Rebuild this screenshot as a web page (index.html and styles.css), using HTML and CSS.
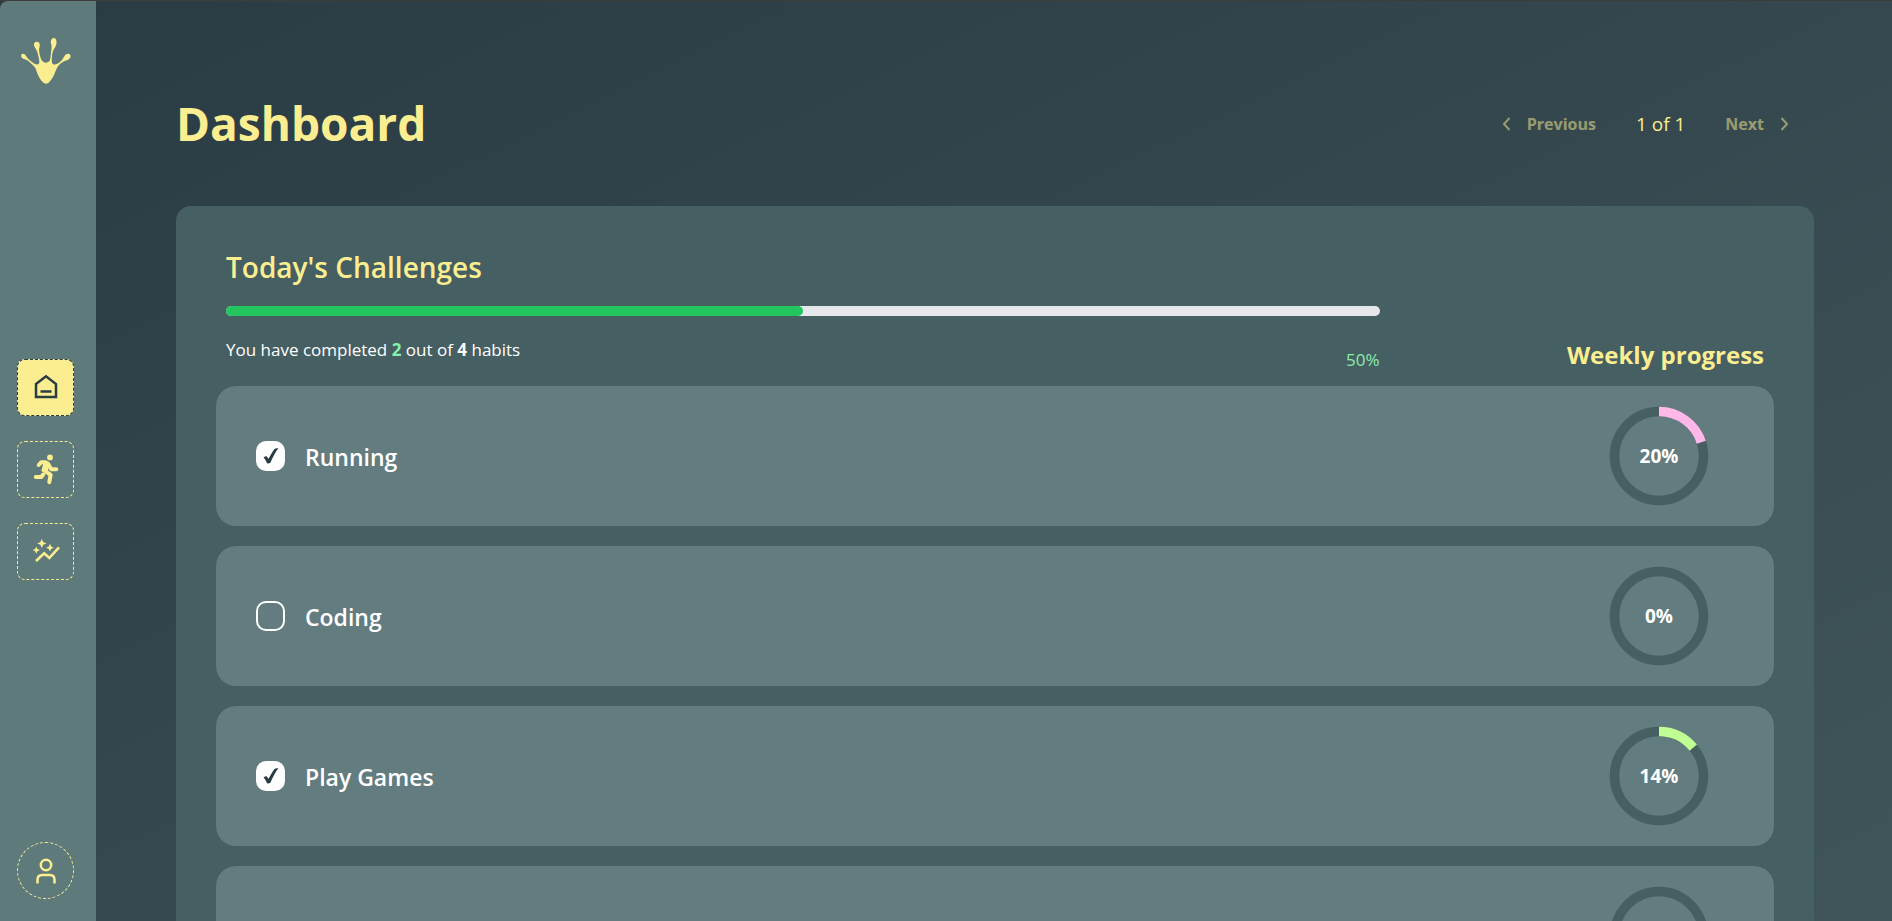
FILE: index.html
```html
<!DOCTYPE html>
<html lang="en">
<head>
<meta charset="utf-8">
<meta name="viewport" content="width=device-width, initial-scale=1">
<title>Dashboard</title>
<link rel="stylesheet" href="styles.css">
</head>
<body>
<div class="app">
  <aside class="sidebar">
    <a class="logo" href="#" aria-label="Home page">
      <svg viewBox="0 0 50 48" width="50" height="48" aria-hidden="true">
        <path d="M25 45.700C28 45.700 31 41 33 37C34.600 33.500 35.500 29.500 38.300 26.700C41 24 43.500 23 46 22.300C48.800 21.500 50.200 19 49.300 17.200C48.300 15.300 45.300 15.200 43.500 18C42 20.500 40.500 23 38.300 24.500C36 26.200 34 26.800 32.300 26.200C30.300 25.300 30.700 22 31 18C31.300 14 32.300 12 34 9.500C36 6.500 36.300 0.300 33.100 0C30 -0.100 29.200 3.300 30.200 6.300C31 9 30.300 11.500 30 14.500C29.700 18.500 29.500 21.500 28.300 23.300C26.700 25.100 23.200 25.100 21.500 23.300C19.500 21 18.500 16.500 18.100 13C17.900 10.500 18.800 9 18.800 7C18.800 4.800 17.500 3.600 15.600 3.700C13 3.900 12.300 6.500 13.500 8.700C15 11.500 16 12.500 16.700 15.500C17.500 19 19.200 24 17.700 26C15.800 27.400 12.500 25.300 10.300 23.500C8 21.700 6.500 20.300 5.200 18.200C4 16 1.900 15.200 0.700 16.300C-0.700 17.800 0.500 20.200 2.900 21C5.200 21.600 7 22.600 8.700 24.200C11.500 26.700 14 28.500 15 31.500C16.500 37 21 45.700 25 45.700Z"/>
      </svg>
    </a>
    <nav class="nav" aria-label="Main">
      <a class="tile tile-active" href="#" aria-label="Dashboard" aria-current="page">
        <svg viewBox="0 0 30 30" width="30" height="30" aria-hidden="true" class="line">
          <path d="M5 11L15 3.300L25 11V24H5Z"/><path d="M9.500 18.500H20.500"/>
        </svg>
      </a>
      <a class="tile" href="#" aria-label="Habits">
        <svg viewBox="0 0 30 34" width="30" height="34" aria-hidden="true" class="runner">
          <circle cx="19" cy="4.400" r="2.900"/>
          <path d="M7.700 12L10.300 9.200H14.500L17.200 11L20.300 16.300H25.300"/>
          <path d="M16 11L12.600 17L19.600 21.800L18.300 29.200"/>
          <path d="M4.800 24H10.300L12.200 21.500"/>
          <path class="torso" d="M13.500 9.500L17.500 11L16 17.500L11.600 17.500Z"/>
        </svg>
      </a>
      <a class="tile" href="#" aria-label="Insights">
        <svg viewBox="0 0 30 30" width="30" height="30" aria-hidden="true" class="insight">
          <path class="trend" d="M5 24L13.200 16.300L18.300 21L28 10.300"/>
          <path d="M10.800 1.900L12.200 5.100L15.400 6.400L12.200 7.700L10.800 10.900L9.400 7.700L6.200 6.400L9.400 5.100ZM5.300 9.400L6.400 12L9 13.100L6.400 14.200L5.300 16.800L4.200 14.200L1.600 13.100L4.200 12ZM19 6.800L20.200 9.500L22.900 10.700L20.200 11.900L19 14.600L17.800 11.900L15.100 10.700L17.800 9.500Z"/>
        </svg>
      </a>
    </nav>
    <a class="tile tile-round" href="#" aria-label="Profile">
      <svg viewBox="0 0 30 30" width="30" height="30" aria-hidden="true" class="line">
        <circle cx="15" cy="9" r="5.200"/><path d="M6.500 27.500V24C6.500 21 8.100 19 11 19H19C21.900 19 23.500 21 23.500 24V27.500"/>
      </svg>
    </a>
  </aside>

  <main class="main">
    <header class="page-head">
      <h1>Dashboard</h1>
      <nav class="pager" aria-label="Pages">
        <button type="button" disabled>
          <svg viewBox="0 0 20 20" width="20" height="20" aria-hidden="true"><path d="M12.500 4L7 10L12.500 16"/></svg>
          Previous
        </button>
        <span>1 of 1</span>
        <button type="button" disabled>
          Next
          <svg viewBox="0 0 20 20" width="20" height="20" aria-hidden="true"><path d="M7.500 4L13 10L7.500 16"/></svg>
        </button>
      </nav>
    </header>

    <section class="panel">
      <div class="summary">
        <div class="summary-main">
          <h2>Today's Challenges</h2>
          <div class="bar"><div class="bar-fill" style="width:50%"></div></div>
          <div class="summary-foot">
            <p>You have completed <b class="done">2</b> out of <b>4</b> habits</p>
            <span class="percent">50%</span>
          </div>
        </div>
        <h3>Weekly progress</h3>
      </div>

      <ul class="habits">
        <li class="habit">
          <label class="habit-label">
            <span class="check"><input type="checkbox" checked><svg viewBox="0 0 16 16" width="16" height="16" aria-hidden="true"><path d="M0.500 9.300L3.300 8L5.600 10.800C7.800 6.400 9.800 3 12 0.500L15.500 0.300C12.300 4 9.700 9.500 7.400 14.700Q5.800 15.800 4.300 15.400Q2.800 12.200 0.500 9.300Z"/></svg></span>
            <span class="name">Running</span>
          </label>
          <div class="ring">
            <svg viewBox="0 0 100 100" width="100" height="100" aria-hidden="true"><circle cx="50" cy="50" r="44.500"/><circle class="arc pink" cx="50" cy="50" r="44.500" pathLength="100" stroke-dasharray="20 100"/></svg>
            <span>20%</span>
          </div>
        </li>
        <li class="habit">
          <label class="habit-label">
            <span class="check"><input type="checkbox"></span>
            <span class="name">Coding</span>
          </label>
          <div class="ring">
            <svg viewBox="0 0 100 100" width="100" height="100" aria-hidden="true"><circle cx="50" cy="50" r="44.500"/></svg>
            <span>0%</span>
          </div>
        </li>
        <li class="habit">
          <label class="habit-label">
            <span class="check"><input type="checkbox" checked><svg viewBox="0 0 16 16" width="16" height="16" aria-hidden="true"><path d="M0.500 9.300L3.300 8L5.600 10.800C7.800 6.400 9.800 3 12 0.500L15.500 0.300C12.300 4 9.700 9.500 7.400 14.700Q5.800 15.800 4.300 15.400Q2.800 12.200 0.500 9.300Z"/></svg></span>
            <span class="name">Play Games</span>
          </label>
          <div class="ring">
            <svg viewBox="0 0 100 100" width="100" height="100" aria-hidden="true"><circle cx="50" cy="50" r="44.500"/><circle class="arc lime" cx="50" cy="50" r="44.500" pathLength="100" stroke-dasharray="14 100"/></svg>
            <span>14%</span>
          </div>
        </li>
        <li class="habit">
          <label class="habit-label">
            <span class="check"><input type="checkbox" aria-label="Habit"></span>
          </label>
          <div class="ring">
            <svg viewBox="0 0 100 100" width="100" height="100" aria-hidden="true"><circle cx="50" cy="50" r="44.500"/></svg>
          </div>
        </li>
      </ul>
    </section>
  </main>
</div>
</body>
</html>
```

FILE: styles.css
```css
:root {
  --yellow: #fbee91;
  --ink: #2b3d44;
  --side: #5f7a7b;
  --panel: #465f62;
  --card: #637c7f;
}

* { box-sizing: border-box; }

body {
  margin: 0;
  background: #3c3c3c;
  color: #fff;
  font-family: "Open Sans", "Noto Sans", sans-serif;
  font-size: 17px;
  line-height: 27px;
}

h1, h2, h3, p, ul { margin: 0; padding: 0; }

.app {
  display: flex;
  height: 100vh;
  border-top: 1px solid #3c3c3c;
  background: linear-gradient(to bottom right, #2a3b43, #40555a);
}

.sidebar {
  display: flex;
  flex: none;
  flex-direction: column;
  align-items: center;
  justify-content: space-between;
  width: 96px;
  padding: 37px 5px 22px 0;
  background: var(--side);
  border-top-left-radius: 8px;
}

.logo { display: block; height: 59px; fill: var(--yellow); }
.logo svg { display: block; }

.nav { display: flex; flex-direction: column; gap: 25px; }

.tile {
  display: grid;
  place-items: center;
  width: 57px;
  height: 57px;
  border: 1px dashed var(--yellow);
  border-radius: 8px;
  color: var(--yellow);
}
.tile-active { background: var(--yellow); border-color: var(--ink); color: var(--ink); }
.tile-round { border-radius: 50%; }

.line { fill: none; stroke: currentColor; stroke-width: 2.5; }
.runner { fill: currentColor; }
.runner path { fill: none; stroke: currentColor; stroke-width: 4; stroke-linecap: round; stroke-linejoin: round; }
.runner .torso { fill: currentColor; stroke-width: 2; }
.insight { fill: currentColor; }
.insight .trend { fill: none; stroke: currentColor; stroke-width: 2.6; }

.main {
  flex: 1;
  min-width: 0;
  padding: 88px 78px 80px 80px;
  overflow-y: auto;
  scrollbar-width: none;
}

.page-head {
  display: flex;
  align-items: center;
  justify-content: space-between;
  margin-bottom: 49px;
  color: var(--yellow);
}

h1 { font-size: 46px; line-height: 68px; font-weight: 700; }

.pager { display: flex; align-items: center; gap: 20px; padding-top: 2px; font-size: 19px; }
.pager button {
  display: flex;
  align-items: center;
  gap: 10px;
  padding: 20px;
  border: 0;
  border-radius: 10px;
  background: none;
  color: var(--yellow);
  font: 700 16px/24px "Open Sans", "Noto Sans", sans-serif;
  opacity: 0.5;
}
.pager svg { fill: none; stroke: currentColor; stroke-width: 2; }

.panel {
  padding: 40px;
  background: var(--panel);
  border-radius: 15px;
}

.summary {
  display: grid;
  grid-template-columns: 3fr 1fr;
  align-items: end;
  padding: 0 10px;
  margin-bottom: 13px;
}
h2 { color: var(--yellow); font-size: 28px; line-height: 42px; font-weight: 600; }
h3 { color: var(--yellow); font-size: 24px; line-height: 36px; font-weight: 700; text-align: right; }

.bar { height: 10px; margin-top: 18px; background: #e5e7eb; border-radius: 5px; }
.bar-fill { height: 100%; background: #22c55e; border-radius: 5px; }

.summary-foot { display: flex; justify-content: space-between; padding-top: 20px; }
.summary-foot b { font-weight: 700; }
.summary-foot .done, .percent { color: #86efac; }
.percent { padding-top: 10px; }

.habits { display: grid; gap: 20px; list-style: none; }
.habit {
  display: flex;
  align-items: center;
  justify-content: space-between;
  padding: 20px 65px 20px 40px;
  background: var(--card);
  border-radius: 20px;
}
.habit-label { display: flex; align-items: center; gap: 20px; }
.name { padding-top: 2px; font-size: 23px; line-height: 36px; font-weight: 600; }

.check { display: grid; place-items: center; }
.check > * { grid-area: 1 / 1; }
.check input {
  width: 29px;
  height: 30px;
  margin: 0;
  appearance: none;
  border: 2px solid #fff;
  border-radius: 10px;
}
.check input:checked { background: #fff; }
.check svg { fill: var(--ink); }

.ring { display: grid; place-items: center; font-size: 19px; font-weight: 700; }
.ring > * { grid-area: 1 / 1; }
.ring svg { display: block; transform: rotate(-90deg); }
.ring circle { fill: none; stroke: var(--panel); stroke-width: 9.5; }
.ring .pink { stroke: #ffb8e8; }
.ring .lime { stroke: #bfff94; }
```
